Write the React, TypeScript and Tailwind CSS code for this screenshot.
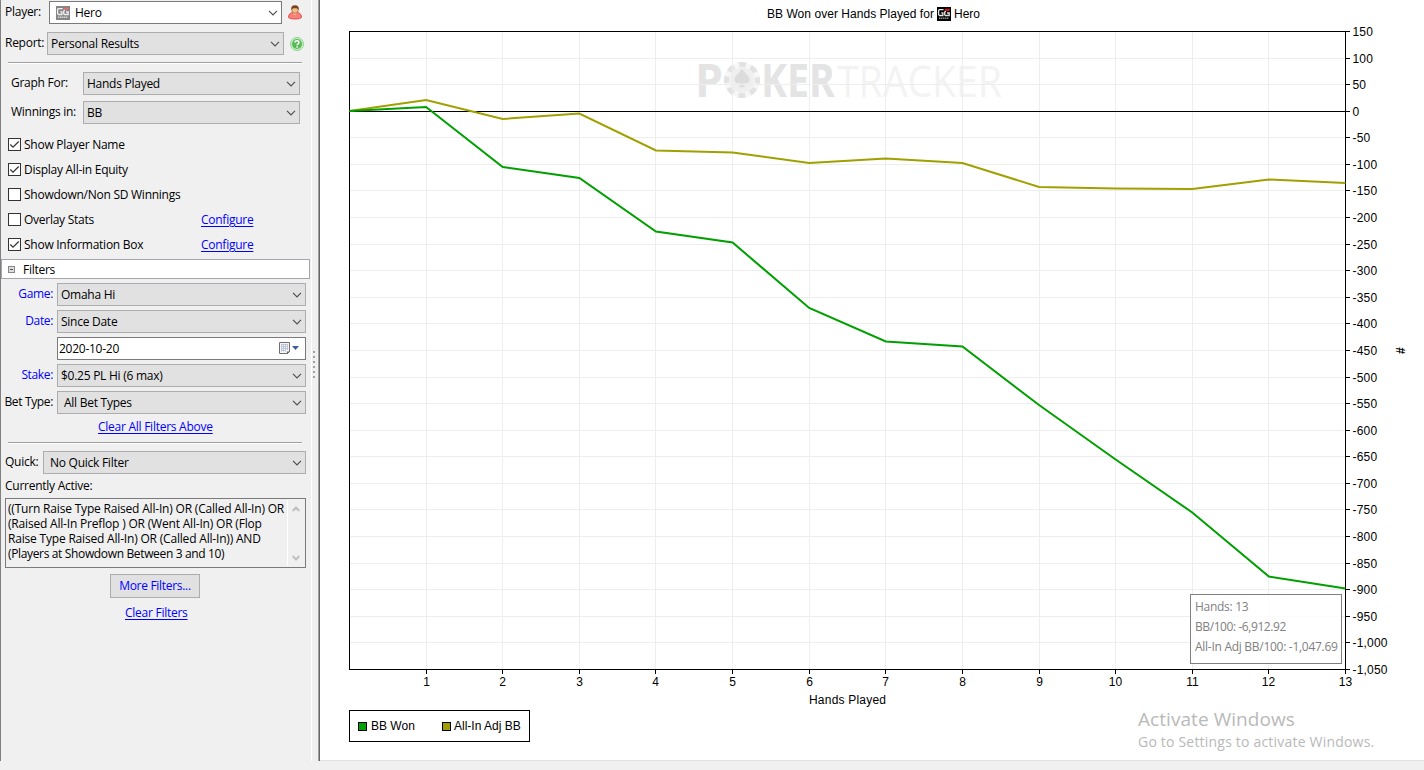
import type { ReactNode } from 'react';

const BB_WON = [111, 107, 167, 178, 231.5, 242.5, 308, 341.5, 346.5, 405, 459.5, 512.5, 576.5, 588.5];
const ALL_IN_ADJ = [111, 100, 119, 113.5, 150.5, 152.5, 163, 158.5, 163, 187, 188.5, 189, 179.5, 183];

const PLOT = { left: 349.5, right: 1345.5, top: 31.5, bottom: 669.5 };
const Y_TICKS = Array.from({ length: 25 }, (_, i) => 150 - i * 50);

const xAt = (hand: number) => PLOT.left + (hand * (PLOT.right - PLOT.left)) / 13;
const yAt = (i: number) => PLOT.top + (i * (PLOT.bottom - PLOT.top)) / 24;
const snap = (v: number) => Math.round(v - 0.51) + 0.5;
const toPoints = (ys: number[]) => ys.map((y, i) => `${xAt(i)},${y}`).join(' ');

function Chevron() {
  return (
    <svg width="10" height="6" viewBox="0 0 10 6" className="ml-auto shrink-0">
      <path d="M1 .8 5 4.8 9 .8" fill="none" stroke="#505050" strokeWidth="1.2" />
    </svg>
  );
}

function GGIcon({ faded = false }: { faded?: boolean }) {
  const ink = faded ? '#f0f0f0' : '#e4e4e4';
  return (
    <svg width="14" height="14" viewBox="0 0 14 14" className="shrink-0">
      <rect width="14" height="14" fill={faded ? '#858585' : '#000'} />
      <path d="M6.6 2.7H2.4L1.600 3.600V7.600L2.400 8.500H5.900V5.800H4.200" fill="none" stroke={ink} strokeWidth="1.300" />
      <path d="M9 4.500H8.300L7.700 5.200V7.800L8.400 8.500H12.200V6H10" fill="none" stroke={ink} strokeWidth="1.300" />
      <path d="M8.200 1.800h5l-1 2.200H7.200z" fill={faded ? '#d87474' : '#d0141c'} />
      <path d="M2 11.300h10" stroke={faded ? '#d5d5d5' : '#888'} strokeWidth="1.400" strokeDasharray="1.400 .5" />
    </svg>
  );
}

function PlayerIcon() {
  return (
    <svg width="14" height="15" viewBox="0 0 14 15" className="shrink-0">
      <path d="M.5 12.2C.5 9 2.800 7.600 5 7.400h4c2.200.2 4.500 1.600 4.500 4.800 0 2.400-13 2.400-13 0z" fill="#f98078" stroke="#d9544d" />
      <path d="M4.800 7.800 7 10l2.200-2.200z" fill="#ffc9b5" />
      <ellipse cx="7" cy="4.800" rx="3.300" ry="3.500" fill="#f3bd86" stroke="#9b6233" strokeWidth=".7" />
      <path d="M3.200 5C2.900 1.700 4.300.3 7 .3S11.100 1.700 10.800 5C9.900 3.500 8.600 3.200 7 3.200S4.100 3.500 3.200 5z" fill="#7a4421" />
    </svg>
  );
}

function HelpIcon() {
  return (
    <svg width="14" height="14" viewBox="0 0 14 14" className="shrink-0">
      <circle cx="7" cy="7" r="6.500" fill="#c9f0c6" stroke="#8fd18c" />
      <circle cx="7" cy="7" r="5" fill="#58b957" />
      <path d="M5 5.600C5 3.100 9 3.200 9 5.400 9 6.900 7.100 6.700 7.100 8.200M7.100 9.300v1.400" fill="none" stroke="#fff" strokeWidth="1.500" />
    </svg>
  );
}

function CalendarIcon() {
  return (
    <svg width="21" height="13" viewBox="0 0 21 13" className="ml-auto shrink-0">
      <path d="M.5.5h10v9l-2 2h-8z" fill="#f4f6fa" stroke="#776d6c" />
      <path d="M2 2.500h7M2 4.500h7M2 6.500h7M2 8.500h5M2.500 2v7.500M4.500 2v7.500M6.500 2v7.500M8.500 2v6" stroke="#b6c0d6" strokeWidth=".8" />
      <path d="M8 12V9.500h3z" fill="#625a60" />
      <path d="M13 4h7l-3.500 4z" fill="#3f5c9a" />
    </svg>
  );
}

function Select({ className, children }: { className: string; children: ReactNode }) {
  return (
    <div className={`flex h-[23px] items-center border border-[#adadad] bg-[#e1e1e1] pr-[3px] pt-px ${className}`}>
      {children}
      <Chevron />
    </div>
  );
}

function Check({ label, checked = false, configure = false }: { label: string; checked?: boolean; configure?: boolean }) {
  return (
    <div className="flex h-[25px] items-center pl-[7px]">
      <span className="mr-[3px] flex size-[13px] items-center justify-center border border-[#333] bg-white">
        {checked && (
          <svg width="11" height="11" viewBox="0 0 11 11" className="shrink-0">
            <path d="M1.300 5.500 4 8.200 9.700 2.500" fill="none" stroke="#333" strokeWidth="1.200" />
          </svg>
        )}
      </span>
      <span className="w-[177px] pt-px">{label}</span>
      {configure && <Link>Configure</Link>}
    </div>
  );
}

function Link({ children }: { children: ReactNode }) {
  return <a className="pt-px text-[#0000ff] underline underline-offset-[1.5px]">{children}</a>;
}

function Rule({ className }: { className: string }) {
  return <div className={`ml-[7px] h-0.5 w-[294px] border-t border-b border-t-[#a0a0a0] border-b-white ${className}`} />;
}

function FilterRow({ label, blue = false, children }: { label: string; blue?: boolean; children: ReactNode }) {
  return (
    <div className="flex h-[23px] items-center">
      <span className={`w-[52px] pb-px text-right tracking-[-0.35px] whitespace-nowrap ${blue ? 'text-[#0000ff]' : ''}`}>{label}</span>
      <div className="ml-1 w-[249px]">{children}</div>
    </div>
  );
}

function Sidebar() {
  return (
    <aside className="flex h-[761px] w-[311px] shrink-0 flex-col border-l border-[#808080] bg-[#f0f0f0]">
      <div className="mt-px flex h-[23px] items-center pl-1">
        <span className="w-11 pb-px">Player:</span>
        <div className="flex h-[23px] w-[233px] items-center border border-[#7a7a7a] bg-white pr-[3px] pl-1.5">
          <GGIcon faded />
          <span className="ml-[5px]">Hero</span>
          <Chevron />
        </div>
        <span className="ml-1.5"><PlayerIcon /></span>
      </div>
      <div className="mt-2 flex h-[23px] items-center pl-1">
        <span className="w-[42px] pb-px">Report:</span>
        <Select className="w-[237px] pl-[3px]">Personal Results</Select>
        <span className="ml-1.5"><HelpIcon /></span>
      </div>
      <Rule className="mt-[7px]" />
      <div className="mt-2 flex h-[23px] items-center pl-2.5">
        <span className="w-[72px] pb-px">Graph For:</span>
        <Select className="w-[217px] pl-[3px]">Hands Played</Select>
      </div>
      <div className="mt-1.5 flex h-[23px] items-center pl-2.5">
        <span className="w-[72px] pb-px">Winnings in:</span>
        <Select className="w-[217px] pl-[3px]">BB</Select>
      </div>
      <div className="mt-2">
        <Check label="Show Player Name" checked />
        <Check label="Display All-in Equity" checked />
        <Check label="Showdown/Non SD Winnings" />
        <Check label="Overlay Stats" configure />
        <Check label="Show Information Box" checked configure />
      </div>
      <div className="mt-0.5 flex h-5 w-[309px] items-center border border-[#a5a5ad] bg-white pl-1.5">
        <span className="mr-2 flex size-[7px] items-center justify-center border border-[#888] bg-[#ddd]">
          <span className="h-px w-[3px] bg-[#555]" />
        </span>
        <span className="pt-0.5">Filters</span>
      </div>

      <div className="mt-1 flex flex-col gap-1">
        <FilterRow label="Game:" blue><Select className="pl-[3px]">Omaha Hi</Select></FilterRow>
        <FilterRow label="Date:" blue><Select className="pl-[3px]">Since Date</Select></FilterRow>
        <FilterRow label="">
          <div className="flex h-[23px] items-center border border-[#7a7a7a] bg-white pr-[5px] pl-px">
            <span>2020-10-20</span>
            <CalendarIcon />
          </div>
        </FilterRow>
        <FilterRow label="Stake:" blue><Select className="pl-[3px]">$0.25 PL Hi (6 max)</Select></FilterRow>
        <FilterRow label="Bet Type:"><Select className="pl-1.5">All Bet Types</Select></FilterRow>
      </div>
      <div className="mt-[5px] h-[17px] pl-[97px]"><Link>Clear All Filters Above</Link></div>
      <Rule className="mt-1.5" />
      <div className="mt-[7px] flex h-[23px] items-center pl-1">
        <span className="w-[38px] pb-px">Quick:</span>
        <Select className="w-[263px] pl-1.5">No Quick Filter</Select>
      </div>
      <div className="mt-1 h-5 pl-1 leading-4">Currently Active:</div>
      <div className="ml-1 flex h-[70px] w-[301px] border border-[#7a7a7a] p-px">
        <div className="w-[281px] border-r border-white pt-px pl-px leading-[15px] tracking-[-0.19px] whitespace-nowrap">
          <div>((Turn Raise Type Raised All-In) OR (Called All-In) OR</div>
          <div>(Raised All-In Preflop ) OR (Went All-In) OR (Flop</div>
          <div>Raise Type Raised All-In) OR (Called All-In)) AND</div>
          <div className="tracking-[-0.35px]">(Players at Showdown Between 3 and 10)</div>
        </div>
        <div className="flex flex-1 flex-col items-center justify-between pt-[6px] pb-[5px]">
          <svg width="8" height="6" viewBox="0 0 8 6"><path d="M.7 5 4 1.500 7.300 5" fill="none" stroke="#bfbfbf" strokeWidth="2" /></svg>
          <svg width="8" height="6" viewBox="0 0 8 6"><path d="M.7 1 4 4.500 7.300 1" fill="none" stroke="#bfbfbf" strokeWidth="2" /></svg>
        </div>
      </div>
      <button className="mt-1.5 ml-[109px] h-6 w-[90px] border border-[#adadad] bg-[#e1e1e1] tracking-[-0.3px] text-[#0000ff]">More Filters...</button>
      <div className="mt-[7px] h-[18px] pl-[124px]"><Link>Clear Filters</Link></div>
    </aside>
  );
}

function Splitter() {
  return (
    <div className="flex h-[761px] w-[9px] shrink-0 items-start border-l border-white bg-[#f0f0f0]">
      <div className="mt-[351px] ml-px flex flex-col gap-[3px]">
        {[0, 1, 2, 3, 4, 5].map(i => <span key={i} className="size-0.5 bg-[#a0a0a0]" />)}
      </div>
      <div className="ml-auto h-full w-0.5 border-r border-l border-r-[#696969] border-l-[#a0a0a0]" />
    </div>
  );
}

function Watermark() {
  return (
    <g fontFamily="Open Sans, sans-serif">
      <g fill="#e4e4e4" fontSize="46" fontWeight="700">
        <text x="695" y="97" textLength="28" lengthAdjust="spacingAndGlyphs">P</text>
        <text x="761" y="97" textLength="74" lengthAdjust="spacingAndGlyphs">KER</text>
      </g>
      <circle cx="742" cy="80" r="18" fill="#f7f7f7" />
      <circle cx="742" cy="80" r="15.500" fill="none" stroke="#e2e2e2" strokeWidth="5" strokeDasharray="7 5.170" strokeDashoffset="3.500" />
      <circle cx="742" cy="80" r="12.500" fill="#efefef" />
      <path d="M742 68.500c2 4.200 7.500 7 7.500 11.300 0 3.700-4.300 4.700-6.500 2.200l1.800 5.200h-5.600l1.800-5.200c-2.200 2.500-6.500 1.500-6.500-2.200 0-4.300 5.500-7.100 7.500-11.300z" fill="#dcdcdc" />
      <text x="837" y="97" fill="#f3f3f3" fontSize="44.500" textLength="165" lengthAdjust="spacingAndGlyphs">TRACKER</text>
    </g>
  );
}

// Plot area and axes; the view box keeps window coordinates.
function Plot() {
  return (
    <svg width="1104" height="686" viewBox="320 24 1104 686" className="block shrink-0" fontFamily="Liberation Sans, Arial, sans-serif" fontSize="12">
      <Watermark />
      <g stroke="#eeeeee" shapeRendering="crispEdges">
        {Array.from({ length: 12 }, (_, i) => (
          <line key={i} x1={snap(xAt(i + 1))} x2={snap(xAt(i + 1))} y1={PLOT.top} y2={PLOT.bottom} />
        ))}
        {Y_TICKS.map((v, i) => (
          <line key={v} x1={PLOT.left} x2={PLOT.right} y1={snap(yAt(i))} y2={snap(yAt(i))} />
        ))}
      </g>
      <g stroke="#000" fill="none" shapeRendering="crispEdges">
        <rect x={PLOT.left} y={PLOT.top} width={PLOT.right - PLOT.left} height={PLOT.bottom - PLOT.top} />
        <line x1={PLOT.left} x2={PLOT.right} y1="111.500" y2="111.500" />
        {Y_TICKS.map((v, i) => (
          <line key={v} x1="1346" x2="1350" y1={snap(yAt(i))} y2={snap(yAt(i))} />
        ))}
        {Array.from({ length: 13 }, (_, i) => (
          <line key={i} x1={snap(xAt(i + 1))} x2={snap(xAt(i + 1))} y1="670" y2="674" />
        ))}
      </g>
      <g letterSpacing="0.200">
        {Y_TICKS.map((v, i) => (
          <text key={v} x="1352.500" y={snap(yAt(i)) + 4.5}>{v.toLocaleString('en-US')}</text>
        ))}
      </g>
      {Array.from({ length: 13 }, (_, i) => (
        <text key={i} x={snap(xAt(i + 1))} y="686" textAnchor="middle">{i + 1}</text>
      ))}
      <text x="809" y="704" textLength="77">Hands Played</text>
      <text transform="translate(1405 354) rotate(-90)" fontSize="12" fontWeight="700">#</text>
      <polyline points={toPoints(ALL_IN_ADJ)} fill="none" stroke="#a0a000" strokeWidth="2" />
      <polyline points={toPoints(BB_WON)} fill="none" stroke="#00a000" strokeWidth="2" />
    </svg>
  );
}

export default function App() {
  return (
    <div className="relative h-[770px] w-[1424px] overflow-hidden bg-[#f0f0f0] font-['Open_Sans',sans-serif] text-[12px] leading-4 tracking-[-0.26px] text-black">
      <div className="flex">
        <Sidebar />
        <Splitter />
        <main className="relative flex h-[761px] w-[1104px] flex-col border-b border-[#e3e3e3] bg-white font-['Liberation_Sans',Arial,sans-serif] tracking-normal">
          <div className="flex h-6 shrink-0 items-center pt-1 pl-[447px]">
            <span className="w-[170px] tracking-[0.04px] whitespace-nowrap">BB Won over Hands Played for</span>
            <GGIcon />
            <span className="ml-[3px]">Hero</span>
          </div>
          <Plot />
          <div className="ml-[29px] flex h-8 w-[181px] shrink-0 items-center border border-black pl-2">
            <span className="size-[9px] border border-black bg-[#00a000]" />
            <span className="ml-1 w-[71px]">BB Won</span>
            <span className="size-[9px] border border-black bg-[#a0a000]" />
            <span className="ml-[3px] whitespace-nowrap">All-In Adj BB</span>
          </div>
          <div className="absolute top-[594px] left-[870px] h-[70px] w-[152px] border border-[#808080] bg-white/80 pt-0.5 pl-1 font-['Open_Sans',sans-serif] leading-5 tracking-[-0.28px] whitespace-nowrap text-[#808080]">
            <div>Hands: 13</div>
            <div className="tracking-[-0.42px]">BB/100: -6,912.92</div>
            <div>All-In Adj BB/100: -1,047.69</div>
          </div>
          <div className="absolute top-[707px] left-[818px] font-['Open_Sans',sans-serif] whitespace-nowrap text-[#b9b9b9]">
            <div className="text-[19px] leading-6 tracking-[0.06px]">Activate Windows</div>
            <div className="text-[14px] leading-[22px] tracking-[0.2px]">Go to Settings to activate Windows.</div>
          </div>
        </main>
      </div>
    </div>
  );
}
